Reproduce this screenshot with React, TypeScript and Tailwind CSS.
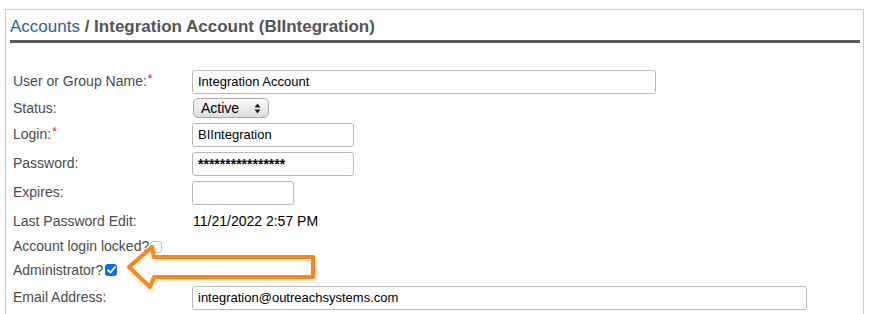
import React from "react";

const font = { fontFamily: '"Liberation Sans", Arial, Helvetica, sans-serif' };

function Req() {
  return <span className="text-[#e0201b] text-[12px] relative -top-[3px] ml-[1px]">*</span>;
}

function Row({ h, label, children }: { h: string; label: React.ReactNode; children?: React.ReactNode }) {
  return (
    <div className={`flex items-center pl-[3px] ${h}`}>
      <div className="w-[179px] shrink-0 text-[14px] text-[#4a4a4a]">{label}</div>
      {children}
    </div>
  );
}

function TextBox({ w, value, big }: { w: string; value?: string; big?: boolean }) {
  return (
    <div
      className={`${w} h-[24px] border border-[#b9b9b9] rounded-[3px] bg-white flex items-center px-[5px] text-black ${
        big ? "text-[14px] font-bold pt-[2px]" : "text-[13px]"
      }`}
    >
      {value}
    </div>
  );
}

function Arrow() {
  return (
    <svg
      className="absolute left-[120px] top-[240px]"
      width="200"
      height="56"
      viewBox="0 0 200 56"
      style={{ filter: "drop-shadow(0 2px 2px rgba(245,137,31,0.25))" }}
    >
      <path
        d="M9 27 L32 7 L34 17 L193 17 L193 37 L34 37 L30 47 Z"
        fill="none"
        stroke="#f5891f"
        strokeWidth="4"
        strokeLinejoin="round"
      />
    </svg>
  );
}

export default function App() {
  return (
    <div className="relative w-[877px] h-[314px] overflow-hidden bg-white pt-[9px] pl-[5px]" style={font}>
      <div className="w-[859px] h-[320px] border-t border-l border-r border-[#cccccc] pl-[4px] pr-[3px] pt-[6px]">
        <div className="border-b-[3px] border-[#5a5a5a] pb-[2px]">
          <div className="text-[17px] leading-[22px]">
            <span className="text-[#2b6398]">Accounts</span>
            <span className="text-[#555555] font-bold"> / Integration Account (BIIntegration)</span>
          </div>
        </div>

        <div className="mt-[24px]">
          <Row h="h-[29px]" label={<>User or Group Name:<Req /></>}>
            <TextBox w="w-[464px]" value="Integration Account" />
          </Row>
          <Row h="h-[24px]" label="Status:">
            <div className="ml-[1px] w-[76px] h-[20px] rounded-[5px] border border-[#a9a9a9] bg-gradient-to-b from-[#fbfbfb] to-[#dedede] flex items-center justify-between pl-[7px] pr-[7px] text-[14px] text-black">
              <span>Active</span>
              <svg width="7" height="11" viewBox="0 0 7 11">
                <path d="M3.5 0.5 L6.5 4.5 L0.5 4.5 Z" fill="#222" />
                <path d="M3.5 10.5 L6.5 6.5 L0.5 6.5 Z" fill="#222" />
              </svg>
            </div>
          </Row>
          <Row h="h-[29px]" label={<>Login:<Req /></>}>
            <TextBox w="w-[162px]" value="BIIntegration" />
          </Row>
          <Row h="h-[29px]" label="Password:">
            <TextBox w="w-[162px]" value="****************" big />
          </Row>
          <Row h="h-[29px]" label="Expires:">
            <TextBox w="w-[102px]" />
          </Row>
          <Row h="h-[28px]" label="Last Password Edit:">
            <span className="ml-[1px] text-[14px] text-black">11/21/2022 2:57 PM</span>
          </Row>
          <div className="flex items-center pl-[3px] h-[22px] text-[14px] text-[#4a4a4a]">
            <span>Account login locked?</span>
            <span className="ml-[1px] mt-[2px] w-[12px] h-[12px] rounded-[3px] border border-[#c4c4c4] bg-white" />
          </div>
          <div className="flex items-center pl-[3px] h-[26px] text-[14px] text-[#4a4a4a]">
            <span>Administrator?</span>
            <span className="ml-[2px] w-[12px] h-[12px] rounded-[3px] bg-[#0b6cf6] flex items-center justify-center">
              <svg width="9" height="8" viewBox="0 0 9 8">
                <path d="M1 4.2 L3.5 6.5 L8 1.2" fill="none" stroke="#fff" strokeWidth="1.8" strokeLinecap="round" strokeLinejoin="round" />
              </svg>
            </span>
          </div>
          <Row h="h-[29px]" label="Email Address:">
            <TextBox w="w-[615px]" value="integration@outreachsystems.com" />
          </Row>
        </div>
      </div>
      <Arrow />
    </div>
  );
}
